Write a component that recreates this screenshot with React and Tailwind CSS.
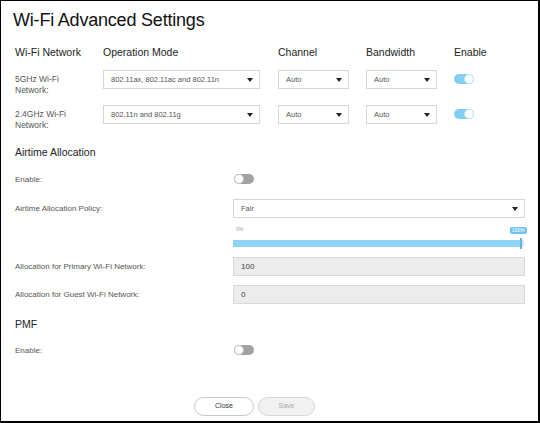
const f = { fontFamily: '"Liberation Sans", Arial, sans-serif' }

function Caret() {
  return (
    <svg width="6" height="4" viewBox="0 0 6 4" className="shrink-0">
      <path d="M0 0 L6 0 L3 4 Z" fill="#222" />
    </svg>
  )
}

function Select({ value, w }) {
  return (
    <div className={`${w} h-[19px] border border-[#d6d6d6] bg-white flex items-center justify-between pl-[7px] pr-[6px] text-[7.5px] text-[#555]`}>
      <span>{value}</span>
      <Caret />
    </div>
  )
}

function Toggle({ on }) {
  return on ? (
    <div className="w-[20px] h-[10px] rounded-full bg-[#82cff3] relative">
      <div className="absolute right-0 top-0 w-[10px] h-[10px] rounded-full bg-white border border-[#bfe6f8]" />
    </div>
  ) : (
    <div className="w-[20px] h-[10px] rounded-full bg-[#a2a2a2] relative">
      <div className="absolute left-0 top-0 w-[10px] h-[10px] rounded-full bg-white border border-[#c8c8c8]" />
    </div>
  )
}

const Label = ({ children, big }) => (
  <p className={`${big ? 'text-[8.5px]' : 'text-[8px]'} text-[#555] leading-[11px]`}>{children}</p>
)

const cols = 'grid grid-cols-[88px_175px_88px_88px_60px] items-start'

export default function App() {
  return (
    <div style={f} className="w-[540px] h-[423px] bg-white border-t border-l border-r-2 border-b-2 border-black relative overflow-hidden">
      <h1 className="absolute left-[12px] top-[7px] text-[18px] text-[#111] tracking-[-0.2px] leading-[24px]">Wi-Fi Advanced Settings</h1>

      <div className="pt-[44px] pl-[14px]">
        {/* wifi table */}
        <div className={cols}>
          <p className="text-[10.5px] text-[#222] leading-[14px]">Wi-Fi Network</p>
          <p className="text-[10.5px] text-[#222] leading-[14px]">Operation Mode</p>
          <p className="text-[10.5px] text-[#222] leading-[14px]">Channel</p>
          <p className="text-[10.5px] text-[#222] leading-[14px]">Bandwidth</p>
          <p className="text-[10.5px] text-[#222] leading-[14px]">Enable</p>
        </div>
        <div className={`${cols} mt-[11px]`}>
          <div className="pt-[4px]"><Label big>5GHz Wi-Fi<br />Network:</Label></div>
          <Select value="802.11ax, 802.11ac and 802.11n" w="w-[157px]" />
          <Select value="Auto" w="w-[71px]" />
          <Select value="Auto" w="w-[71px]" />
          <div className="pt-[4px]"><Toggle on /></div>
        </div>
        <div className={`${cols} mt-[9px]`}>
          <div className="pt-[4px]"><Label big>2.4GHz Wi-Fi<br />Network:</Label></div>
          <Select value="802.11n and 802.11g" w="w-[157px]" />
          <Select value="Auto" w="w-[71px]" />
          <Select value="Auto" w="w-[71px]" />
          <div className="pt-[4px]"><Toggle on /></div>
        </div>

        {/* airtime */}
        <h2 className="text-[10.5px] text-[#222] mt-[14px] leading-[14px]">Airtime Allocation</h2>
        <div className="grid grid-cols-[218px_292px] items-center mt-[14px] h-[12px]">
          <Label>Enable:</Label>
          <div className="pl-[1px]"><Toggle /></div>
        </div>
        <div className="grid grid-cols-[218px_292px] items-center mt-[14px]">
          <Label>Airtime Allocation Policy:</Label>
          <Select value="Fair" w="w-[292px]" />
        </div>
        <div className="ml-[218px] w-[292px] relative pt-[8px]">
          <span className="block text-[5px] text-[#999] pl-[3px] leading-[7px]">0%</span>
          <span className="absolute left-[277px] top-[9px] text-[5px] text-white bg-[#6cc5ee] rounded-[2px] px-[2px] leading-[7px]">100%</span>
          <div className="flex items-center h-[11px] mt-[5px]">
            <div className="w-[287px] h-[7px] bg-[#8fd4f4]" />
            <div className="w-[2px] h-[11px] bg-[#5ab7e3]" />
            <div className="w-[2px] h-[7px] bg-[#e3e3e3]" />
          </div>
        </div>
        <div className="grid grid-cols-[218px_292px] items-center mt-[8px]">
          <Label>Allocation for Primary Wi-Fi Network:</Label>
          <div className="h-[19px] bg-[#ececec] border border-[#d9d9d9] flex items-center pl-[7px] text-[8px] text-[#444]">100</div>
        </div>
        <div className="grid grid-cols-[218px_292px] items-center mt-[9px]">
          <Label>Allocation for Guest Wi-Fi Network:</Label>
          <div className="h-[19px] bg-[#ececec] border border-[#d9d9d9] flex items-center pl-[7px] text-[8px] text-[#444]">0</div>
        </div>

        {/* pmf */}
        <h2 className="text-[10.5px] text-[#222] mt-[13px] leading-[14px]">PMF</h2>
        <div className="grid grid-cols-[218px_292px] items-center mt-[13px] h-[12px]">
          <Label>Enable:</Label>
          <div className="pl-[1px]"><Toggle /></div>
        </div>
      </div>

      <div className="absolute left-[193px] top-[396px] flex gap-[4px]">
        <button className="w-[60px] h-[19px] rounded-full border border-[#c8c8c8] bg-white text-[7px] text-[#333]">Close</button>
        <button className="w-[57px] h-[19px] rounded-full border border-[#d6d6d6] bg-[#f1f1f1] text-[7px] text-[#aaa]">Save</button>
      </div>
    </div>
  )
}
